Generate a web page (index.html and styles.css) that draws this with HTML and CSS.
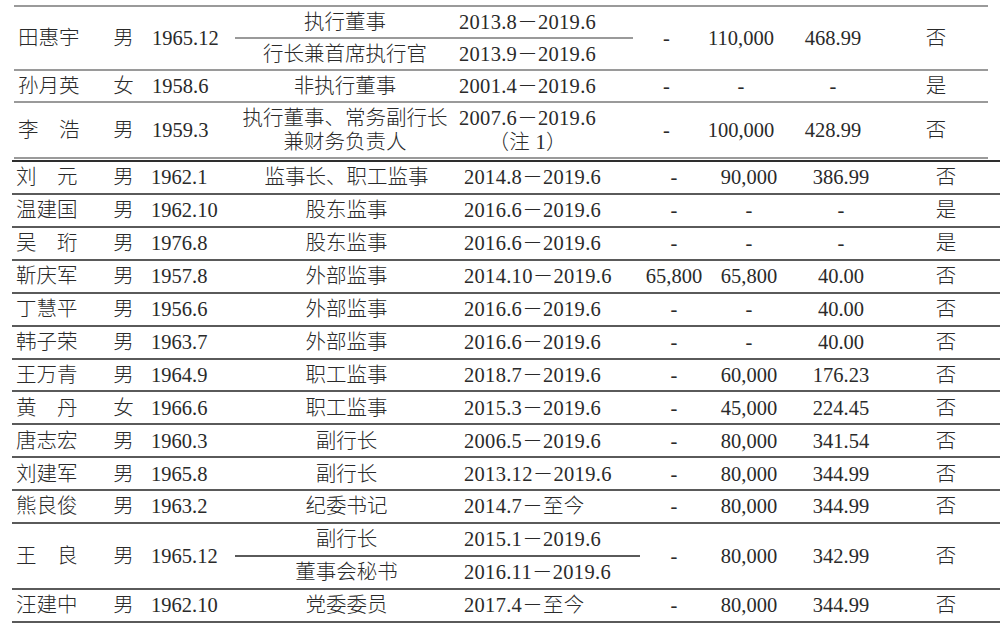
FILE: index.html
```html
<!DOCTYPE html>
<html lang="zh-CN">
<head>
<meta charset="utf-8">
<title>董事、监事及高级管理人员</title>
<link rel="stylesheet" href="styles.css">
</head>
<body>
<div class="page">
  <div class="grid upper">
    <div class="c name span2">田惠宇</div>
    <div class="c span2">男</div>
    <div class="c birth span2">1965.12</div>
    <div class="c">执行董事</div>
    <div class="c date">2013.8－2019.6</div>
    <div class="c span2">-</div>
    <div class="c span2">110,000</div>
    <div class="c span2">468.99</div>
    <div class="c span2">否</div>
    <div class="c">行长兼首席执行官</div>
    <div class="c date">2013.9－2019.6</div>

    <div class="c name">孙月英</div>
    <div class="c">女</div>
    <div class="c birth">1958.6</div>
    <div class="c">非执行董事</div>
    <div class="c date">2001.4－2019.6</div>
    <div class="c">-</div>
    <div class="c">-</div>
    <div class="c">-</div>
    <div class="c">是</div>

    <div class="c name">李　浩</div>
    <div class="c">男</div>
    <div class="c birth">1959.3</div>
    <div class="c multi"><span>执行董事、常务副行长</span><span>兼财务负责人</span></div>
    <div class="c date"><span class="stack"><span>2007.6－2019.6</span><span>（注 1）</span></span></div>
    <div class="c">-</div>
    <div class="c">100,000</div>
    <div class="c">428.99</div>
    <div class="c">否</div>
  </div>

  <div class="grid lower">
    <div class="c name">刘　元</div><div class="c">男</div><div class="c birth">1962.1</div><div class="c">监事长、职工监事</div><div class="c date">2014.8－2019.6</div><div class="c">-</div><div class="c">90,000</div><div class="c">386.99</div><div class="c">否</div>
    <div class="c name">温建国</div><div class="c">男</div><div class="c birth">1962.10</div><div class="c">股东监事</div><div class="c date">2016.6－2019.6</div><div class="c">-</div><div class="c">-</div><div class="c">-</div><div class="c">是</div>
    <div class="c name">吴　珩</div><div class="c">男</div><div class="c birth">1976.8</div><div class="c">股东监事</div><div class="c date">2016.6－2019.6</div><div class="c">-</div><div class="c">-</div><div class="c">-</div><div class="c">是</div>
    <div class="c name">靳庆军</div><div class="c">男</div><div class="c birth">1957.8</div><div class="c">外部监事</div><div class="c date">2014.10－2019.6</div><div class="c">65,800</div><div class="c">65,800</div><div class="c">40.00</div><div class="c">否</div>
    <div class="c name">丁慧平</div><div class="c">男</div><div class="c birth">1956.6</div><div class="c">外部监事</div><div class="c date">2016.6－2019.6</div><div class="c">-</div><div class="c">-</div><div class="c">40.00</div><div class="c">否</div>
    <div class="c name">韩子荣</div><div class="c">男</div><div class="c birth">1963.7</div><div class="c">外部监事</div><div class="c date">2016.6－2019.6</div><div class="c">-</div><div class="c">-</div><div class="c">40.00</div><div class="c">否</div>
    <div class="c name">王万青</div><div class="c">男</div><div class="c birth">1964.9</div><div class="c">职工监事</div><div class="c date">2018.7－2019.6</div><div class="c">-</div><div class="c">60,000</div><div class="c">176.23</div><div class="c">否</div>
    <div class="c name">黄　丹</div><div class="c">女</div><div class="c birth">1966.6</div><div class="c">职工监事</div><div class="c date">2015.3－2019.6</div><div class="c">-</div><div class="c">45,000</div><div class="c">224.45</div><div class="c">否</div>
    <div class="c name">唐志宏</div><div class="c">男</div><div class="c birth">1960.3</div><div class="c">副行长</div><div class="c date">2006.5－2019.6</div><div class="c">-</div><div class="c">80,000</div><div class="c">341.54</div><div class="c">否</div>
    <div class="c name">刘建军</div><div class="c">男</div><div class="c birth">1965.8</div><div class="c">副行长</div><div class="c date">2013.12－2019.6</div><div class="c">-</div><div class="c">80,000</div><div class="c">344.99</div><div class="c">否</div>
    <div class="c name">熊良俊</div><div class="c">男</div><div class="c birth">1963.2</div><div class="c">纪委书记</div><div class="c date">2014.7－至今</div><div class="c">-</div><div class="c">80,000</div><div class="c">344.99</div><div class="c">否</div>

    <div class="c name span2">王　良</div>
    <div class="c span2">男</div>
    <div class="c birth span2">1965.12</div>
    <div class="c">副行长</div>
    <div class="c date">2015.1－2019.6</div>
    <div class="c span2">-</div>
    <div class="c span2">80,000</div>
    <div class="c span2">342.99</div>
    <div class="c span2">否</div>
    <div class="c">董事会秘书</div>
    <div class="c date">2016.11－2019.6</div>

    <div class="c name">汪建中</div><div class="c">男</div><div class="c birth">1962.10</div><div class="c">党委委员</div><div class="c date">2017.4－至今</div><div class="c">-</div><div class="c">80,000</div><div class="c">344.99</div><div class="c">否</div>
  </div>
</div>
</body>
</html>
```

FILE: styles.css
```css
html, body {
  margin: 0;
  background: #ffffff;
}

body {
  color: #2a2a2a;
  font-family: "Liberation Serif", "Noto Sans CJK SC", serif;
  font-size: 20.5px;
  font-weight: 300;
}

.page {
  padding: 5px 0 0 12px;
}

.grid {
  display: grid;
}

.upper {
  grid-template-columns: 91px 37px 93px 220px 178px 67px 82px 102px 104px;
  grid-template-rows: 32px 32px 32px 56px;
  width: 974px;
  margin-left: 2px;
  border-top: 2px solid #9a9a9a;
}

.lower {
  grid-template-columns: 93px 37px 93px 223px 182px 68px 82px 102px 108px;
  grid-auto-rows: 32.93px;
  width: 988px;
  margin-top: 1px;
  border-top: 2px solid #2e2e2e;
}

.c {
  display: flex;
  align-items: center;
  justify-content: center;
  box-sizing: border-box;
  border-bottom: 2px solid #9a9a9a;
  white-space: nowrap;
  line-height: 1;
}

.lower .c {
  border-bottom-color: #5a5a5a;
}

.span2 {
  grid-row: span 2;
}

.name {
  justify-content: flex-start;
  padding-left: 4px;
}

.birth {
  justify-content: flex-start;
  padding-left: 10px;
}

.lower .birth {
  padding-left: 9px;
}

.date {
  justify-content: flex-start;
  padding-left: 4px;
  letter-spacing: 0.3px;
}

.lower .date {
  padding-left: 6px;
}

.multi {
  flex-direction: column;
  line-height: 24px;
}

.stack {
  display: flex;
  flex-direction: column;
  align-items: center;
  line-height: 24px;
}
```
